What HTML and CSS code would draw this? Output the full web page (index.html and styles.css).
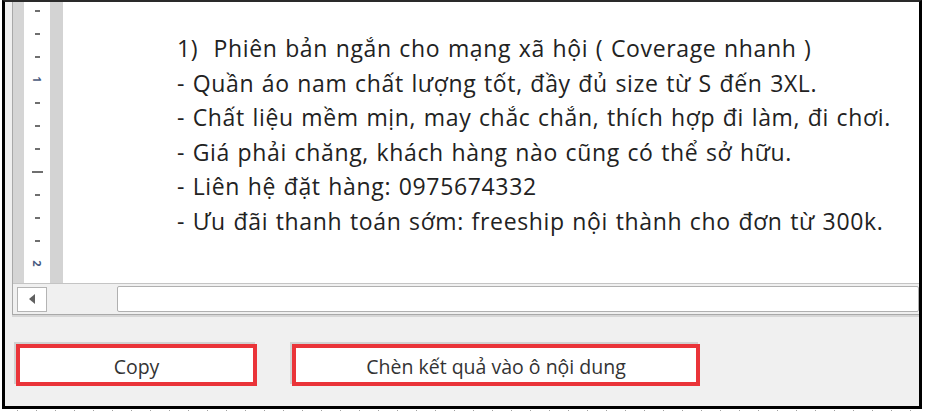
FILE: index.html
```html
<!DOCTYPE html>
<html lang="vi">
<head>
    <meta charset="UTF-8">
    <meta name="viewport" content="width=device-width, initial-scale=1.0">
    <title>Kết quả</title>
    <link rel="stylesheet" href="styles.css">
</head>
<body>

    <div class="dialog">
        <!-- Editor panel with vertical ruler -->
        <div class="panel">
            <div class="editor">
                <div class="ruler">
                    <div class="ruler-marks">
                        <span class="mark"><i class="tick"></i></span>
                        <span class="mark"><i class="tick"></i></span>
                        <span class="mark"><i class="tick"></i></span>
                        <span class="mark"><b class="num">1</b></span>
                        <span class="mark"><i class="tick"></i></span>
                        <span class="mark"><i class="tick"></i></span>
                        <span class="mark"><i class="tick"></i></span>
                        <span class="mark"><i class="tick long"></i></span>
                        <span class="mark"><i class="tick"></i></span>
                        <span class="mark"><i class="tick"></i></span>
                        <span class="mark"><i class="tick"></i></span>
                        <span class="mark"><b class="num">2</b></span>
                    </div>
                </div>
                <div class="doc">
                    <p>1)&nbsp; Phiên bản ngắn cho mạng xã hội ( Coverage nhanh )</p>
                    <p>- Quần áo nam chất lượng tốt, đầy đủ size từ S đến 3XL.</p>
                    <p>- Chất liệu mềm mịn, may chắc chắn, thích hợp đi làm, đi chơi.</p>
                    <p>- Giá phải chăng, khách hàng nào cũng có thể sở hữu.</p>
                    <p>- Liên hệ đặt hàng: 0975674332</p>
                    <p>- Ưu đãi thanh toán sớm: freeship nội thành cho đơn từ 300k.</p>
                </div>
            </div>

            <!-- Horizontal scrollbar -->
            <div class="hscroll">
                <div class="arrow-btn">
                    <svg width="8" height="10" viewBox="0 0 8 10"><path d="M7 0 L1 5 L7 10 Z" fill="#606060"/></svg>
                </div>
                <div class="thumb"></div>
            </div>
        </div>

        <!-- Action buttons -->
        <div class="actions">
            <button class="btn btn-copy">Copy</button>
            <button class="btn btn-insert">Chèn kết quả vào ô nội dung</button>
        </div>
    </div>
    <div class="page-edge"></div>

</body>
</html>
```

FILE: styles.css
```css
/* General Styles */
body {
    margin: 0;
    background-color: #fff;
    overflow: hidden;
}

/* Dialog frame */
.dialog {
    box-sizing: border-box;
    width: 920px;
    height: 409px;
    margin-left: 2px;
    background-color: #f0f0f0;
    border: 3px solid #000;
    border-top: 2px solid #2a2a2a;
    overflow: hidden;
}

/* Editor panel */
.panel {
    margin-left: 7px;
    height: 312px;
    border-left: 1px solid #a9a9a9;
    border-bottom: 1px solid #a9a9a9;
    box-shadow: 0 2px 0 #d6d6d6;
    display: flex;
    flex-direction: column;
}

.editor {
    display: flex;
    height: 281px;
    background-color: #fff;
}

/* Vertical ruler */
.ruler {
    width: 26px;
    border-left: 11px solid #d5d5d5;
    border-right: 13px solid #d3d3d3;
    background-color: #fff;
    overflow: hidden;
}

.ruler-marks {
    display: flex;
    flex-direction: column;
    margin-top: -3px;
}

.mark {
    height: 23px;
    display: flex;
    align-items: center;
    justify-content: center;
}

.tick {
    display: block;
    width: 5px;
    height: 2px;
    background-color: #6f6f6f;
}

.tick.long {
    width: 11px;
}

.num {
    font-family: "Open Sans", sans-serif;
    font-size: 11px;
    font-weight: bold;
    color: #4a5a80;
    transform: rotate(90deg);
}

/* Document text */
.doc {
    flex: 1;
    padding: 29px 0 0 114px;
    font-family: "Open Sans", sans-serif;
    font-size: 23px;
    letter-spacing: 0.65px;
    word-spacing: 1px;
    line-height: 34.6px;
    color: #222;
    white-space: nowrap;
    overflow: hidden;
}

.doc p {
    margin: 0;
}

/* Horizontal scrollbar */
.hscroll {
    flex: 1;
    display: flex;
    align-items: center;
    border-top: 1px solid #c4c4c4;
    background-color: #f0f0f0;
    padding-left: 4px;
}

.arrow-btn {
    box-sizing: border-box;
    width: 30px;
    height: 25px;
    background-color: #fff;
    border: 1px solid #b4b4b4;
    display: flex;
    align-items: center;
    justify-content: center;
}

.thumb {
    box-sizing: border-box;
    flex: 1;
    height: 26px;
    margin-left: 70px;
    background-color: #fff;
    border: 1px solid #b0b0b0;
    border-radius: 2px;
}

/* Buttons */
.actions {
    display: flex;
    gap: 35px;
    margin: 29px 0 0 11px;
}

.btn {
    box-sizing: border-box;
    height: 42px;
    padding-top: 3px;
    background-color: #fff;
    border: 4px solid #ea3439;
    box-shadow: -2px -2px 0 #d2d2d2;
    font-family: "Open Sans", sans-serif;
    font-size: 19.5px;
    color: #333;
    cursor: pointer;
}

.btn-copy {
    width: 241px;
}

.btn-insert {
    width: 408px;
}

/* Dotted edge below the dialog */
.page-edge {
    height: 1px;
    margin: 1px 0 0 17px;
    background: repeating-linear-gradient(to right, #a0a0a0 0 1px, transparent 1px 19px);
}
```
